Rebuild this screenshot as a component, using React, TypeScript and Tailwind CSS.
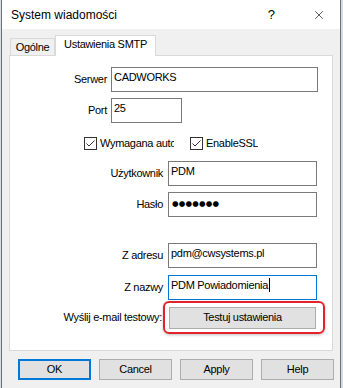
import { X } from 'lucide-react'

const font = "font-['Liberation_Sans',Arial,sans-serif]"

function Field({
  label,
  labelW,
  inputW,
  gap,
  focused,
  children,
  className = '',
}: {
  label: string
  labelW: number
  inputW: number
  gap: number
  focused?: boolean
  children: React.ReactNode
  className?: string
}) {
  return (
    <div className={`flex items-center ${className}`}>
      <div className="text-right text-[11px] tracking-[-0.3px] text-black" style={{ width: labelW, marginRight: gap }}>
        {label}
      </div>
      <div
        className={`h-[25px] border bg-white px-[2px] pt-[2px] text-[11px] leading-[14px] tracking-[-0.3px] text-black whitespace-nowrap ${
          focused ? 'border-[#0078d7]' : 'border-[#7a7a7a]'
        }`}
        style={{ width: inputW }}
      >
        {children}
      </div>
    </div>
  )
}

function Check({ label, clipW }: { label: string; clipW?: number }) {
  return (
    <div className="flex items-center">
      <div className="w-[13px] h-[13px] border border-[#333333] bg-white flex items-center justify-center">
        <svg width="11" height="11" viewBox="0 0 11 11">
          <path d="M1.5 5.5 L4 8 L9.5 2.5" fill="none" stroke="#333333" strokeWidth="1" />
        </svg>
      </div>
      <span
        className="ml-[3px] text-[11px] tracking-[-0.3px] text-black whitespace-nowrap overflow-hidden"
        style={clipW ? { width: clipW } : undefined}
      >
        {label}
      </span>
    </div>
  )
}

function DialogButton({ children, primary }: { children: React.ReactNode; primary?: boolean }) {
  return (
    <button
      className={`w-[73px] h-[21px] bg-[#e1e1e1] text-[11px] tracking-[-0.3px] text-black flex items-center justify-center ${
        primary ? 'border-2 border-[#0078d7]' : 'border border-[#adadad]'
      }`}
    >
      {children}
    </button>
  )
}

export default function App() {
  return (
    <div className={`w-[343px] h-[388px] overflow-hidden bg-[#d4dce6] ${font}`}>
      <div className="ml-[1px] w-[340px] h-full border-x border-[#6f6f6f] bg-[#f0f0f0] flex flex-col">
        {/* title bar */}
        <div className="h-[29px] bg-white flex items-center pl-[9px] shrink-0">
          <span className="text-[12px] text-black">System wiadomości</span>
          <span className="ml-auto mr-[37px] text-[13px] text-black">?</span>
          <X size={14} strokeWidth={1.1} className="mr-[14px] text-black" />
        </div>

        {/* tabs */}
        <div className="mt-[6px] ml-[8px] flex items-end h-[20px] relative z-10">
          <div className="w-[45px] h-[17px] border border-b-0 border-[#d9d9d9] bg-[#f0f0f0] text-[11px] tracking-[-0.3px] text-black flex items-center justify-center pt-[1px]">
            Ogólne
          </div>
          <div className="w-[101px] h-[21px] -mb-[1px] border border-b-0 border-[#d9d9d9] bg-white text-[11px] tracking-[-0.3px] text-black flex items-center justify-center pb-[3px]">
            Ustawienia SMTP
          </div>
        </div>

        {/* panel */}
        <div className="ml-[7px] w-[324px] h-[296px] border border-[#d9d9d9] bg-white flex flex-col">
          <Field label="Serwer" labelW={97} inputW={207} gap={4} className="mt-[11px]">
            CADWORKS
          </Field>
          <Field label="Port" labelW={97} inputW={71} gap={4} className="mt-[6px]">
            25
          </Field>
          <div className="mt-[12px] pl-[74px] flex items-center">
            <Check label="Wymagana autoryzacja" clipW={74} />
            <div className="ml-[16px]">
              <Check label="EnableSSL" />
            </div>
          </div>
          <Field label="Użytkownik" labelW={153} inputW={149} gap={5} className="mt-[9px]">
            PDM
          </Field>
          <Field label="Hasło" labelW={153} inputW={149} gap={5} className="mt-[6px]">
            <span className="font-['DejaVu_Sans',sans-serif] text-[7.5px] tracking-[0.2px] leading-[16px] pl-[1px]">●●●●●●●</span>
          </Field>
          <Field label="Z adresu" labelW={153} inputW={149} gap={5} className="mt-[26px]">
            pdm@cwsystems.pl
          </Field>
          <Field label="Z nazwy" labelW={153} inputW={149} gap={5} focused className="mt-[7px]">
            <span className="inline-flex items-center">
              PDM Powiadomienia
              <span className="ml-[1px] w-[1px] h-[14px] bg-black" />
            </span>
          </Field>
          <div className="mt-[7px] flex items-center">
            <div className="w-[152px] text-right text-[11px] tracking-[-0.3px] text-black whitespace-nowrap">
              Wyślij e-mail testowy:
            </div>
            <div className="ml-[7px] relative">
              <button className="w-[147px] h-[22px] bg-[#e1e1e1] border border-[#adadad] text-[11px] tracking-[-0.3px] text-black flex items-center justify-center">
                Testuj ustawienia
              </button>
              <div className="absolute -left-[6px] -top-[6px] -right-[9px] -bottom-[5px] border-2 border-[#e3232b] rounded-[6px] shadow-[0_1px_3px_rgba(0,0,0,0.25)] pointer-events-none" />
            </div>
          </div>
        </div>

        {/* dialog buttons */}
        <div className="mt-[8px] pl-[16px] flex gap-[8px]">
          <DialogButton primary>OK</DialogButton>
          <DialogButton>Cancel</DialogButton>
          <DialogButton>Apply</DialogButton>
          <DialogButton>Help</DialogButton>
        </div>
      </div>
    </div>
  )
}
